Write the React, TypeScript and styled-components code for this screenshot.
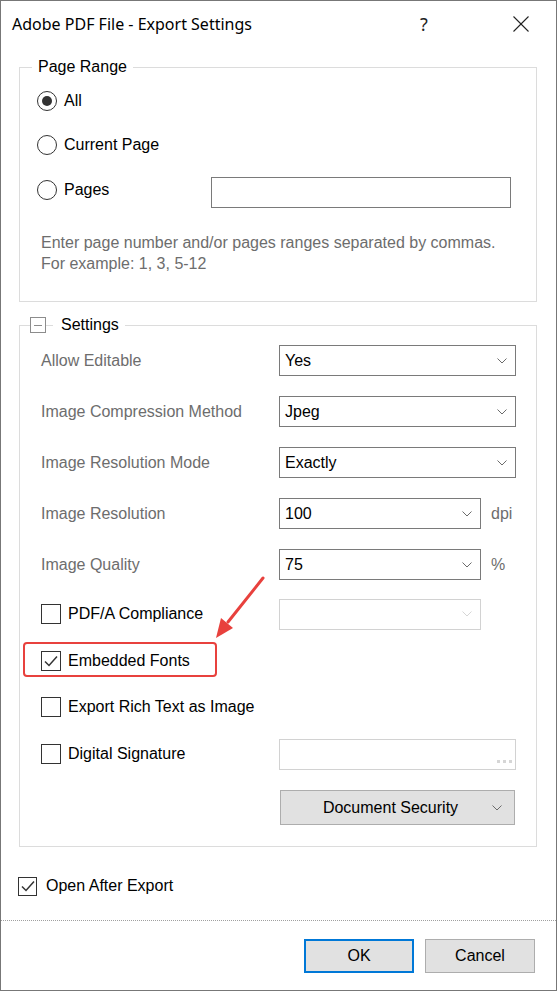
import React from "react";
import styled, { createGlobalStyle } from "styled-components";

const Global = createGlobalStyle`
  html, body { margin: 0; padding: 0; background: #fff; }
  body { font-family: "Liberation Sans", Arial, sans-serif; }
  * { box-sizing: border-box; }
`;

const Window = styled.div`
  position: relative;
  width: 557px;
  height: 991px;
  border: 1px solid #777;
  background: #fff;
  color: #000;
  font-family: "Liberation Sans", Arial, sans-serif;
  font-size: 16px;
  display: flex;
  flex-direction: column;
`;

const TitleBar = styled.div`
  height: 46px;
  display: flex;
  align-items: center;
  padding: 0 12px 0 11px;
`;

const Title = styled.div`
  flex: 1;
  font-family: "Noto Sans", "Open Sans", sans-serif;
  font-size: 16px;
  color: #000;
`;

const TitleButton = styled.div<{ $ml?: number }>`
  width: 46px;
  height: 46px;
  margin-left: ${(p) => p.$ml ?? 0}px;
  display: flex;
  align-items: center;
  justify-content: center;
  font-family: "Noto Sans", "Open Sans", sans-serif;
  font-size: 18px;
  color: #222;
`;

const Body = styled.div`
  padding: 10px 19px 0 18px;
  display: flex;
  flex-direction: column;
`;

const Group = styled.fieldset<{ $mt: number }>`
  margin: ${(p) => p.$mt}px 0 0 0;
  padding: 0;
  min-width: 0;
  border: 1px solid #dcdcdc;
`;

const Legend = styled.legend<{ $ml: number; $pl: number }>`
  margin-left: ${(p) => p.$ml}px;
  padding: 0 6px 0 ${(p) => p.$pl}px;
  line-height: 20px;
  height: 20px;
  font-size: 16px;
  color: #000;
`;

const LegendInner = styled.span`
  display: inline-flex;
  vertical-align: top;
  align-items: center;
  height: 20px;
`;

const CollapseBox = styled.span`
  width: 16px;
  height: 16px;
  border: 1px solid #8c8c8c;
  display: inline-flex;
  align-items: center;
  justify-content: center;
  &::after {
    content: "";
    width: 8px;
    height: 1px;
    background: #8c8c8c;
  }
`;

const LegendDash = styled.span`
  width: 7px;
  height: 1px;
  background: #dcdcdc;
  margin-right: 8px;
`;

const GroupInner = styled.div<{ $pt: number; $pb: number; $pl: number; $pr: number }>`
  padding: ${(p) => p.$pt}px ${(p) => p.$pr}px ${(p) => p.$pb}px ${(p) => p.$pl}px;
  display: flex;
  flex-direction: column;
`;

const Row = styled.div<{ $h: number; $end?: boolean }>`
  position: relative;
  height: ${(p) => p.$h}px;
  display: flex;
  align-items: ${(p) => (p.$end ? "flex-end" : "center")};
`;

const RadioCircle = styled.span<{ $on?: boolean }>`
  width: 20px;
  height: 20px;
  border-radius: 50%;
  border: 1px solid #333;
  flex-shrink: 0;
  display: flex;
  align-items: center;
  justify-content: center;
  &::after {
    content: "";
    width: 10px;
    height: 10px;
    border-radius: 50%;
    background: #333;
    display: ${(p) => (p.$on ? "block" : "none")};
  }
`;

const OptionLabel = styled.span<{ $w?: number; $ml?: number }>`
  margin-left: ${(p) => p.$ml ?? 7}px;
  ${(p) => (p.$w ? `width: ${p.$w}px;` : "")}
  color: #000;
  white-space: nowrap;
`;

const TextBox = styled.div<{ $w: number; $light?: boolean; $mt?: number }>`
  width: ${(p) => p.$w}px;
  height: 31px;
  margin-top: ${(p) => p.$mt ?? 0}px;
  border: 1px solid ${(p) => (p.$light ? "#d2d2d2" : "#7a7a7a")};
  background: #fff;
  display: flex;
  align-items: flex-end;
  justify-content: flex-end;
  padding: 0 3px 6px 0;
`;

const Dots = styled.span`
  display: flex;
  gap: 3px;
  & > i {
    width: 3px;
    height: 3px;
    background: #d6d6d6;
  }
`;

const HelpText = styled.div`
  margin: 20px 0 0 4px;
  color: #6d6d6d;
  line-height: 21px;
`;

const SettingLabel = styled.span`
  width: 238px;
  color: #6d6d6d;
  white-space: nowrap;
`;

const Select = styled.div<{ $w: number; $disabled?: boolean }>`
  width: ${(p) => p.$w}px;
  height: 31px;
  border: 1px solid ${(p) => (p.$disabled ? "#d2d2d2" : "#7a7a7a")};
  background: #fff;
  display: flex;
  align-items: center;
  padding: 0 8px 0 5px;
  color: #000;
`;

const SelectValue = styled.span`
  flex: 1;
`;

const Unit = styled.span`
  margin-left: 10px;
  color: #6d6d6d;
`;

const CheckWrap = styled.span`
  position: relative;
  width: 238px;
  display: flex;
  align-items: center;
`;

const CheckBox = styled.span<{ $size: number }>`
  width: ${(p) => p.$size}px;
  height: ${(p) => p.$size}px;
  border: 1px solid #333;
  background: #fff;
  flex-shrink: 0;
  display: flex;
  align-items: center;
  justify-content: center;
`;

const Highlight = styled.span`
  position: absolute;
  left: -18px;
  top: -9px;
  width: 194px;
  height: 35px;
  border: 2px solid #e8413d;
  border-radius: 4px;
  pointer-events: none;
`;

const DocButton = styled.div`
  margin-left: 239px;
  width: 235px;
  height: 35px;
  background: #e1e1e1;
  border: 1px solid #adadad;
  display: flex;
  align-items: center;
  color: #000;
`;

const DocButtonText = styled.span`
  flex: 1;
  text-align: center;
  padding-left: 12px;
`;

const DocButtonChevron = styled.span`
  width: 26px;
  display: flex;
  justify-content: flex-start;
  padding-left: 4px;
`;

const FooterCheck = styled.div`
  margin: 24px 0 0 17px;
  height: 30px;
  display: flex;
  align-items: center;
`;

const Separator = styled.div`
  margin-top: 19px;
  border-top: 1px dotted #a0a0a0;
`;

const ButtonBar = styled.div`
  margin-top: 18px;
  display: flex;
  justify-content: flex-end;
  gap: 11px;
  padding-right: 21px;
`;

const DialogButton = styled.div<{ $primary?: boolean }>`
  width: 110px;
  height: 34px;
  background: #e1e1e1;
  border: ${(p) => (p.$primary ? "2px solid #0078d7" : "1px solid #adadad")};
  display: flex;
  align-items: center;
  justify-content: center;
  color: #000;
`;

const ArrowSvg = styled.svg`
  position: absolute;
  left: 204px;
  top: 569px;
  overflow: visible;
  pointer-events: none;
`;

const Chevron = ({ color = "#6b6b6b" }: { color?: string }) => (
  <svg width="10" height="6" viewBox="0 0 10 6">
    <polyline points="0.5,0.5 5,5 9.5,0.5" fill="none" stroke={color} strokeWidth="1" />
  </svg>
);

const Check = () => (
  <svg width="16" height="14" viewBox="0 0 16 14">
    <polyline points="2,7.5 6,11.5 14,2.5" fill="none" stroke="#333" strokeWidth="1.5" />
  </svg>
);

const CloseIcon = () => (
  <svg width="16" height="16" viewBox="0 0 16 16">
    <line x1="0.5" y1="0.5" x2="15.5" y2="15.5" stroke="#222" strokeWidth="1.1" />
    <line x1="15.5" y1="0.5" x2="0.5" y2="15.5" stroke="#222" strokeWidth="1.1" />
  </svg>
);

const settings: { label: string; value: string; w: number; unit?: string }[] = [
  { label: "Allow Editable", value: "Yes", w: 237 },
  { label: "Image Compression Method", value: "Jpeg", w: 237 },
  { label: "Image Resolution Mode", value: "Exactly", w: 237 },
  { label: "Image Resolution", value: "100", w: 202, unit: "dpi" },
  { label: "Image Quality", value: "75", w: 202, unit: "%" },
];

export default function App() {
  return (
    <>
      <Global />
      <Window>
        <TitleBar>
          <Title>Adobe PDF File - Export Settings</Title>
          <TitleButton>?</TitleButton>
          <TitleButton $ml={51}>
            <CloseIcon />
          </TitleButton>
        </TitleBar>
        <Body>
          <Group $mt={0}>
            <Legend $ml={12} $pl={6}>
              Page Range
            </Legend>
            <GroupInner $pt={2} $pb={27} $pl={17} $pr={25}>
              <Row $h={44}>
                <RadioCircle $on />
                <OptionLabel>All</OptionLabel>
              </Row>
              <Row $h={44}>
                <RadioCircle />
                <OptionLabel>Current Page</OptionLabel>
              </Row>
              <Row $h={45}>
                <RadioCircle />
                <OptionLabel $w={147}>Pages</OptionLabel>
                <TextBox $w={300} $mt={6} />
              </Row>
              <HelpText>
                Enter page number and/or pages ranges separated by commas.
                <br />
                For example: 1, 3, 5-12
              </HelpText>
            </GroupInner>
          </Group>

          <Group $mt={13}>
            <Legend $ml={10} $pl={0}>
              <LegendInner>
                <CollapseBox />
                <LegendDash />
                Settings
              </LegendInner>
            </Legend>
            <GroupInner $pt={0} $pb={21} $pl={21} $pr={20}>
              {settings.map((s) => (
                <Row $h={51} key={s.label}>
                  <SettingLabel>{s.label}</SettingLabel>
                  <Select $w={s.w}>
                    <SelectValue>{s.value}</SelectValue>
                    <Chevron />
                  </Select>
                  {s.unit && <Unit>{s.unit}</Unit>}
                </Row>
              ))}
              <Row $h={48}>
                <CheckWrap>
                  <CheckBox $size={20} />
                  <OptionLabel>PDF/A Compliance</OptionLabel>
                </CheckWrap>
                <Select $w={202} $disabled>
                  <SelectValue />
                  <Chevron color="#d6d6d6" />
                </Select>
              </Row>
              <Row $h={45}>
                <CheckWrap>
                  <CheckBox $size={20}>
                    <Check />
                  </CheckBox>
                  <OptionLabel>Embedded Fonts</OptionLabel>
                  <Highlight />
                </CheckWrap>
              </Row>
              <Row $h={47}>
                <CheckWrap>
                  <CheckBox $size={20} />
                  <OptionLabel>Export Rich Text as Image</OptionLabel>
                </CheckWrap>
              </Row>
              <Row $h={48}>
                <CheckWrap>
                  <CheckBox $size={20} />
                  <OptionLabel>Digital Signature</OptionLabel>
                </CheckWrap>
                <TextBox $w={237} $light>
                  <Dots>
                    <i />
                    <i />
                    <i />
                  </Dots>
                </TextBox>
              </Row>
              <Row $h={47} $end>
                <DocButton>
                  <DocButtonText>Document Security</DocButtonText>
                  <DocButtonChevron>
                    <Chevron />
                  </DocButtonChevron>
                </DocButton>
              </Row>
            </GroupInner>
          </Group>
        </Body>

        <FooterCheck>
          <CheckBox $size={19}>
            <Check />
          </CheckBox>
          <OptionLabel $ml={9}>Open After Export</OptionLabel>
        </FooterCheck>
        <Separator />
        <ButtonBar>
          <DialogButton $primary>OK</DialogButton>
          <DialogButton>Cancel</DialogButton>
        </ButtonBar>

        <ArrowSvg width="70" height="75" viewBox="0 0 70 75">
          <line x1="58" y1="8" x2="23" y2="52" stroke="#e8413d" strokeWidth="3" strokeLinecap="round" />
          <polygon points="11,68 28,58 16,48" fill="#e8413d" />
        </ArrowSvg>
      </Window>
    </>
  );
}
